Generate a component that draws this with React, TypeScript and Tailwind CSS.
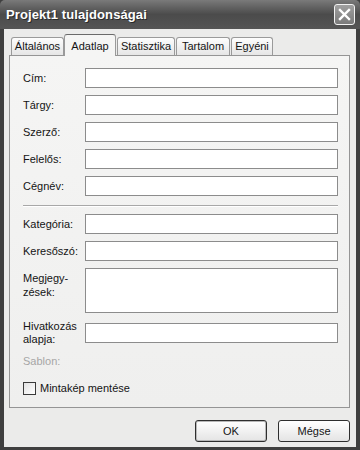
import React from "react";

function Row({ label, top, h = 20 }: { label: React.ReactNode; top: number; h?: number }) {
  return (
    <div className="flex" style={{ marginTop: top }}>
      <div className="w-[62px] shrink-0 leading-[13px] flex items-center" style={{ height: h }}>
        {label}
      </div>
      <div className="flex-1 bg-white border border-[#8c8c8c]" style={{ height: h }} />
    </div>
  );
}

export default function App() {
  const tabBase =
    "h-[18px] flex items-center justify-center border border-b-0 border-[#9a9a9a] rounded-t-[3px] bg-gradient-to-b from-[#fdfdfd] to-[#e6e6e6]";
  return (
    <div className="w-[360px] h-[450px] flex flex-col bg-[#3f3f3f] font-['Liberation_Sans',Arial,sans-serif] text-[11px] text-[#141414] overflow-hidden">
      {/* Title bar */}
      <div className="h-[29px] shrink-0 flex items-center justify-between pl-[6px] pr-[5px] rounded-t-[5px] bg-gradient-to-b from-[#7a7a7a] via-[#4b4b4b] to-[#555555]">
        <span className="text-white font-bold text-[13px] tracking-[0.1px] [text-shadow:1px_1px_0_#2a2a2a]">
          Projekt1 tulajdonságai
        </span>
        <div className="w-[21px] h-[21px] rounded-[3px] border border-[#f2f2f2] bg-gradient-to-b from-[#a0a0a0] to-[#7a7a7a] flex items-center justify-center">
          <svg width="13" height="13" viewBox="0 0 13 13">
            <path d="M2 2 L11 11 M11 2 L2 11" stroke="#ffffff" strokeWidth="2.4" strokeLinecap="square" />
          </svg>
        </div>
      </div>

      {/* Body */}
      <div className="flex-1 flex flex-col mx-[4px] mb-[3px] bg-[#ebebea]">
        {/* Tabs */}
        <div className="h-[26px] pt-[5px] pl-[7px] flex items-end relative z-10">
          <div className={`${tabBase} w-[53px]`}>Általános</div>
          <div className="w-[52px] h-[22px] -mb-[1px] flex items-start pt-[3px] justify-center border border-b-0 border-[#9a9a9a] rounded-t-[3px] bg-[#f5f5f4] border-t-[#6a6a6a]">
            Adatlap
          </div>
          <div className={`${tabBase} w-[58px] ml-[1px]`}>Statisztika</div>
          <div className={`${tabBase} w-[54px] ml-[1px]`}>Tartalom</div>
          <div className={`${tabBase} w-[42px] ml-[1px]`}>Egyéni</div>
        </div>

        {/* Panel */}
        <div className="ml-[5px] w-[341px] h-[353px] border border-[#959595] bg-gradient-to-b from-[#f5f5f4] to-[#efefee] pl-[13px] pr-[11px] flex flex-col">
          <Row label="Cím:" top={12} />
          <Row label="Tárgy:" top={7} />
          <Row label="Szerző:" top={7} />
          <Row label="Felelős:" top={7} />
          <Row label="Cégnév:" top={7} />
          <div className="mt-[9px] border-t border-[#a8a8a8] border-b border-b-white" />
          <Row label="Kategória:" top={7} />
          <Row label="Keresőszó:" top={7} />
          <div className="flex mt-[7px]">
            <div className="w-[62px] shrink-0 leading-[14px] pt-[3px]">
              Megjegy-
              <br />
              zések:
            </div>
            <div className="flex-1 h-[45px] bg-white border border-[#8c8c8c]" />
          </div>
          <div className="flex mt-[10px] h-[20px] items-start">
            <div className="w-[62px] shrink-0 leading-[13px] -mt-[3px] h-[26px]">
              Hivatkozás
              <br />
              alapja:
            </div>
            <div className="flex-1 h-[20px] bg-white border border-[#8c8c8c]" />
          </div>
          <div className="mt-[11px] h-[14px] leading-[14px] text-[#a6a6a6]">Sablon:</div>
          <div className="mt-[14px] h-[13px] flex items-center">
            <div className="w-[13px] h-[13px] border border-[#3a3a3a] bg-gradient-to-br from-[#e2e2e2] to-white" />
            <span className="ml-[4px]">Mintakép mentése</span>
          </div>
        </div>

        {/* Buttons */}
        <div className="flex justify-end pr-[6px] mt-[12px] gap-[11px]">
          <div className="w-[72px] h-[22px] rounded-[3px] border border-[#2e2e2e] bg-gradient-to-b from-white to-[#e4e4e4] flex items-center justify-center shadow-[inset_0_0_0_1px_#b8b8b8]">
            OK
          </div>
          <div className="w-[72px] h-[22px] rounded-[3px] border border-[#2e2e2e] bg-gradient-to-b from-white to-[#e4e4e4] flex items-center justify-center">
            Mégse
          </div>
        </div>
      </div>
    </div>
  );
}
